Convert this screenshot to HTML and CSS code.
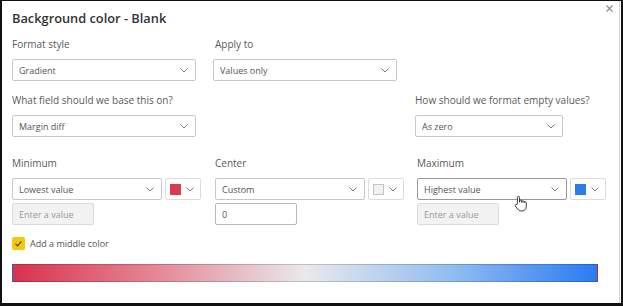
FILE: index.html
```html
<!DOCTYPE html>
<html lang="en">
<head>
    <meta charset="UTF-8">
    <title>Background color - Blank</title>
    <link rel="stylesheet" href="styles.css">
</head>
<body>
    <div class="frame">
        <div class="dialog">
            <button class="close" aria-label="Close">
                <svg width="7" height="7" viewBox="0 0 7 7"><path d="M.5.5l6 6M6.5.5l-6 6" stroke="#888" stroke-width="1.1"/></svg>
            </button>

            <h1 class="title">Background color - Blank</h1>

            <div class="row row-first">
                <div class="field">
                    <div class="label">Format style</div>
                    <div class="select w-wide">Gradient <svg class="chev" viewBox="0 0 8 5"><path d="M.5.5 4 4 7.5.5"/></svg></div>
                </div>
                <div class="field">
                    <div class="label">Apply to</div>
                    <div class="select w-wide shift">Values only <svg class="chev" viewBox="0 0 8 5"><path d="M.5.5 4 4 7.5.5"/></svg></div>
                </div>
            </div>

            <div class="row row-second">
                <div class="field">
                    <div class="label">What field should we base this on?</div>
                    <div class="select w-wide">Margin diff <svg class="chev" viewBox="0 0 8 5"><path d="M.5.5 4 4 7.5.5"/></svg></div>
                </div>
                <div></div>
                <div class="field shift">
                    <div class="label">How should we format empty values?</div>
                    <div class="select w-mid">As zero <svg class="chev" viewBox="0 0 8 5"><path d="M.5.5 4 4 7.5.5"/></svg></div>
                </div>
            </div>

            <div class="row row-third">
                <div class="field">
                    <div class="label">Minimum</div>
                    <div class="combo">
                        <div class="select w-range">Lowest value <svg class="chev" viewBox="0 0 8 5"><path d="M.5.5 4 4 7.5.5"/></svg></div>
                        <div class="swatch-btn"><span class="swatch red"></span><svg class="chev" viewBox="0 0 8 5"><path d="M.5.5 4 4 7.5.5"/></svg></div>
                    </div>
                    <div class="input">Enter a value</div>
                </div>
                <div class="field">
                    <div class="label">Center</div>
                    <div class="combo">
                        <div class="select w-range">Custom <svg class="chev" viewBox="0 0 8 5"><path d="M.5.5 4 4 7.5.5"/></svg></div>
                        <div class="swatch-btn"><span class="swatch blank"></span><svg class="chev" viewBox="0 0 8 5"><path d="M.5.5 4 4 7.5.5"/></svg></div>
                    </div>
                    <div class="input filled">0</div>
                </div>
                <div class="field">
                    <div class="label">Maximum</div>
                    <div class="combo">
                        <div class="select w-range active">Highest value <svg class="chev" viewBox="0 0 8 5"><path d="M.5.5 4 4 7.5.5"/></svg></div>
                        <div class="swatch-btn"><span class="swatch blue"></span><svg class="chev" viewBox="0 0 8 5"><path d="M.5.5 4 4 7.5.5"/></svg></div>
                    </div>
                    <div class="input">Enter a value</div>
                </div>
            </div>

            <div class="check-row">
                <span class="check">
                    <svg width="9" height="9" viewBox="0 0 9 9"><path d="M1.5 4.8l2 2 4-4.5" fill="none" stroke="#5a4a10" stroke-width="1.2"/></svg>
                </span>
                Add a middle color
            </div>

            <div class="gradient"></div>

            <svg class="cursor" width="14" height="17" viewBox="0 0 16 19">
                <path d="M5 9V2.5a1.2 1.2 0 0 1 2.4 0V8h.2V6.8a1.2 1.2 0 0 1 2.4 0V8.3h.2V7.6a1.2 1.2 0 0 1 2.4 0v1h.2a1.2 1.2 0 0 1 2.4 0V13c0 2.8-2 5-4.8 5H9c-1.6 0-2.6-.7-3.5-1.9L2.6 12.2a1.2 1.2 0 0 1 1.9-1.4z" fill="#fff" stroke="#222" stroke-width="1"/>
            </svg>
        </div>
    </div>
</body>
</html>
```

FILE: styles.css
```css
body {
    margin: 0;
    font-family: "Open Sans", "Noto Sans", sans-serif;
    background: #fff;
}

.frame {
    width: 623px;
    height: 306px;
    box-sizing: border-box;
    border: 2px solid #111;
    border-top-width: 1px;
    border-bottom-width: 3px;
    background: #fff;
}

.dialog {
    position: relative;
    height: 100%;
    box-sizing: border-box;
    padding: 8px 0 0 10px;
    margin-right: 1px;
    border-right: 1px solid #d4d4d4;
}

.close {
    position: absolute;
    top: 4px;
    right: 6px;
    padding: 0;
    border: none;
    background: none;
    line-height: 0;
}

.title {
    margin: 0;
    font-size: 12.8px;
    font-weight: 600;
    line-height: 18px;
    color: #333;
}

.row {
    display: grid;
    grid-template-columns: 203px 202px 1fr;
}

.row-first { margin-top: 10px; }
.row-second { margin-top: 12px; }
.row-third { margin-top: 19px; }

.shift {
    margin-left: -2px;
}

.label {
    font-size: 10px;
    line-height: 14px;
    color: #5a5a5a;
    margin-bottom: 8px;
}

.select {
    display: flex;
    align-items: center;
    justify-content: space-between;
    height: 22px;
    box-sizing: border-box;
    padding: 0 7px 0 6px;
    border: 1px solid #c8c8c8;
    border-radius: 2px;
    font-size: 9px;
    color: #555;
}

.select.active {
    border-color: #999;
}

.w-wide { width: 184px; }
.w-mid { width: 148px; }
.w-range { width: 150px; }

.chev {
    width: 8px;
    height: 5px;
    fill: none;
    stroke: #7a7a7a;
    stroke-width: 1;
}

.combo {
    display: flex;
    gap: 3px;
}

.swatch-btn {
    display: flex;
    align-items: center;
    justify-content: space-between;
    width: 36px;
    height: 22px;
    box-sizing: border-box;
    padding: 0 6px 0 4px;
    border: 1px solid #dcdcdc;
    border-radius: 2px;
}

.swatch {
    width: 11px;
    height: 11px;
    box-sizing: border-box;
}

.swatch.red { background: #d83a4f; }
.swatch.blue { background: #2b7de9; }
.swatch.blank {
    background: #f2f2f2;
    border: 1px solid #c4c4c4;
}

.input {
    display: flex;
    align-items: center;
    width: 82px;
    height: 22px;
    margin-top: 3px;
    box-sizing: border-box;
    padding-left: 6px;
    border: 1px solid #dadada;
    border-radius: 2px;
    background: #f2f2f2;
    font-size: 9px;
    color: #999;
}

.input.filled {
    background: #fff;
    border-color: #b8b8b8;
    color: #555;
}

.check-row {
    display: flex;
    align-items: center;
    gap: 5px;
    margin-top: 12px;
    font-size: 9px;
    color: #555;
}

.check {
    display: flex;
    align-items: center;
    justify-content: center;
    width: 13px;
    height: 13px;
    border-radius: 2px;
    background: #f2c811;
}

.gradient {
    width: 586px;
    height: 18px;
    margin-top: 14px;
    box-sizing: border-box;
    border: 1px solid rgba(0, 0, 0, 0.18);
    background: linear-gradient(to right, #d9324c 0%, #e58998 25%, #e9e9ec 50%, #92bdf2 75%, #2a7bf2 100%);
}

.cursor {
    position: absolute;
    left: 511px;
    top: 194px;
}
```
